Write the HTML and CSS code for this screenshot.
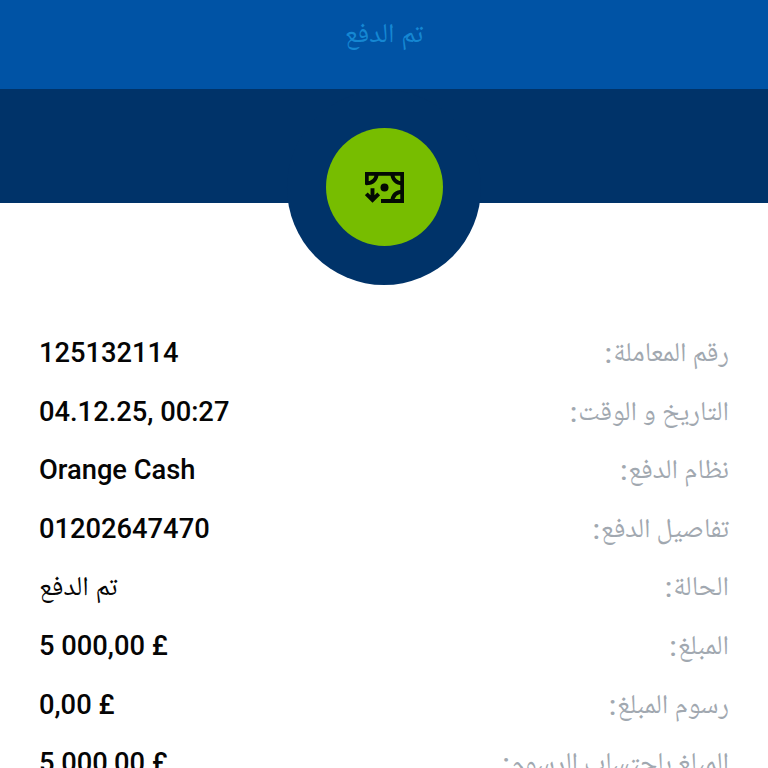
FILE: index.html
```html
<!DOCTYPE html>
<html lang="ar" dir="rtl">
<head>
<meta charset="utf-8">
<title>تم الدفع</title>
<link rel="stylesheet" href="styles.css">
</head>
<body>
<header class="bar"><h1 class="bar-title">تم الدفع</h1></header>
<section class="hero">
  <div class="ring"><div class="disc">
    <svg class="icon" viewBox="0 0 39 31" width="39" height="31">
      <g fill="none" stroke="#030a03" stroke-width="3.900">
        <path d="M1.750 12.800V1.750H37.250V29H16"/>
        <path d="M1 11.300Q11.300 11.300 11.800 1M38 11.300Q27.700 11.300 27.200 1M38 19.700Q27.700 19.700 27.200 30"/>
        <path d="M7.500 16.200V28M1.300 21.800l6.200 6.200 6.200-6.200"/>
      </g>
      <circle cx="19.500" cy="15.500" r="4" fill="#030a03"/>
    </svg>
  </div></div>
</section>
<dl class="details">
  <div class="row"><dt>رقم المعاملة<span class="colon">:</span></dt><dd><bdi dir="ltr">125132114</bdi></dd></div>
  <div class="row"><dt>التاريخ و الوقت<span class="colon">:</span></dt><dd><bdi dir="ltr">04.12.25, 00:27</bdi></dd></div>
  <div class="row"><dt>نظام الدفع<span class="colon">:</span></dt><dd><bdi dir="ltr">Orange Cash</bdi></dd></div>
  <div class="row"><dt>تفاصيل الدفع<span class="colon">:</span></dt><dd><bdi dir="ltr">01202647470</bdi></dd></div>
  <div class="row"><dt>الحالة<span class="colon">:</span></dt><dd class="status">تم الدفع</dd></div>
  <div class="row"><dt>المبلغ<span class="colon">:</span></dt><dd><bdi dir="ltr">5 000,00 £</bdi></dd></div>
  <div class="row"><dt>رسوم المبلغ<span class="colon">:</span></dt><dd><bdi dir="ltr">0,00 £</bdi></dd></div>
  <div class="row"><dt>المبلغ باحتساب الرسوم<span class="colon">:</span></dt><dd><bdi dir="ltr">5 000,00 £</bdi></dd></div>
</dl>
</body>
</html>
```
FILE: styles.css
```css
* { box-sizing: border-box; }
body { margin: 0; height: 768px; overflow: hidden; background: #fff; font-family: Roboto, "Noto Naskh Arabic UI", "Noto Naskh Arabic", "Noto Sans Arabic", "DejaVu Sans", sans-serif; }
.bar { height: 89px; background: #0053a5; display: flex; justify-content: center; padding-top: 20px; }
.bar-title { margin: 0; font-size: 27.300px; line-height: 34px; font-weight: 400; color: #1587d3; }
.hero { height: 114px; background: #003369; display: flex; justify-content: center; align-items: flex-start; }
.ring { width: 194px; height: 195px; flex: none; border-radius: 50%; background: #003369; display: flex; justify-content: center; align-items: flex-start; padding-top: 38px; margin-top: 1px; }
.disc { width: 117px; height: 118px; border-radius: 50%; background: #77bd00; display: flex; justify-content: center; align-items: center; }
.icon { display: block; }
.details { margin: 121px 39px 0; }
.row { display: flex; justify-content: space-between; height: 58.600px; line-height: 58.600px; font-size: 27.300px; }
dt { padding-top: 2px; color: #a1a8b0; font-family: "Noto Naskh Arabic UI", "Noto Naskh Arabic", "Noto Sans Arabic", "DejaVu Sans", sans-serif; }
.colon { font-family: Roboto, sans-serif; font-weight: 500; line-height: 1; margin-right: 1px; vertical-align: 2px; }
dd { margin: 0; color: #050505; font-weight: 500; }
.status { font-weight: 400; padding-top: 3px; }
```
